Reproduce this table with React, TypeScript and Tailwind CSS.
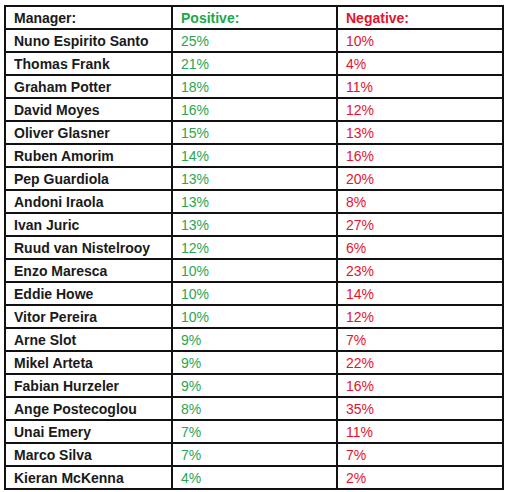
import React from "react";

const rows: [string, string, string][] = [
  ["Nuno Espirito Santo", "25%", "10%"],
  ["Thomas Frank", "21%", "4%"],
  ["Graham Potter", "18%", "11%"],
  ["David Moyes", "16%", "12%"],
  ["Oliver Glasner", "15%", "13%"],
  ["Ruben Amorim", "14%", "16%"],
  ["Pep Guardiola", "13%", "20%"],
  ["Andoni Iraola", "13%", "8%"],
  ["Ivan Juric", "13%", "27%"],
  ["Ruud van Nistelrooy", "12%", "6%"],
  ["Enzo Maresca", "10%", "23%"],
  ["Eddie Howe", "10%", "14%"],
  ["Vitor Pereira", "10%", "12%"],
  ["Arne Slot", "9%", "7%"],
  ["Mikel Arteta", "9%", "22%"],
  ["Fabian Hurzeler", "9%", "16%"],
  ["Ange Postecoglou", "8%", "35%"],
  ["Unai Emery", "7%", "11%"],
  ["Marco Silva", "7%", "7%"],
  ["Kieran McKenna", "4%", "2%"],
];

const cell = "h-[23px] flex items-center pl-[8px] pt-[1px] border-r-2 border-b-2 border-[#111]";

export default function App() {
  return (
    <div className="w-[507px] h-[492px] bg-white pt-[5px] pl-[4px]" style={{ fontFamily: '"Liberation Sans", Arial, sans-serif' }}>
      <div className="grid grid-cols-[167px_165px_166px] w-max border-t-2 border-l-2 border-[#111] text-[14px] leading-none">
        <div className={`${cell} font-bold text-[#1a1a1a]`}>Manager:</div>
        <div className={`${cell} font-bold text-[#22a64a]`}>Positive:</div>
        <div className={`${cell} font-bold text-[#e3132e]`}>Negative:</div>
        {rows.map(([n, p, q]) => (
          <React.Fragment key={n}>
            <div className={`${cell} font-bold text-[#1a1a1a]`}>{n}</div>
            <div className={`${cell} text-[#2aa552]`}>{p}</div>
            <div className={`${cell} text-[#e3132e]`}>{q}</div>
          </React.Fragment>
        ))}
      </div>
    </div>
  );
}
